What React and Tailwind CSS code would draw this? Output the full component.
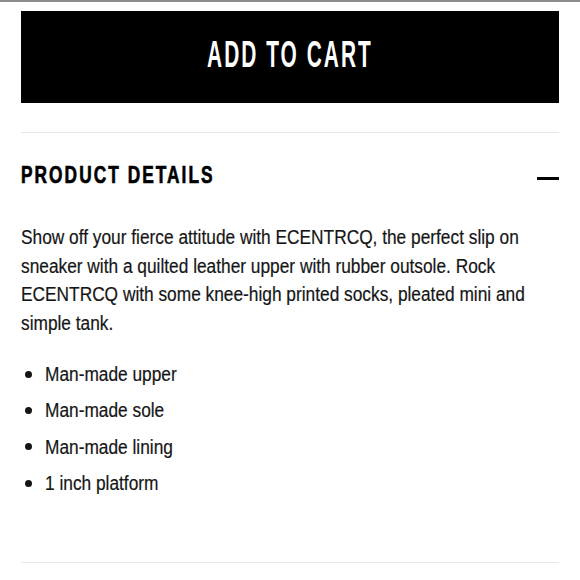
const bullets = ['Man-made upper', 'Man-made sole', 'Man-made lining', '1 inch platform'];

const App = () => {
  return (
    <div
      className="w-[580px] h-[580px] bg-white border-t-2 border-[#8c8c8c] overflow-hidden"
      style={{ fontFamily: '"Liberation Sans", Arial, sans-serif' }}
    >
      <div className="px-[21px] pt-[9px]">
        <button className="w-full h-[92px] bg-black text-white flex items-center justify-center pb-[4px] overflow-hidden">
          <span className="inline-block whitespace-nowrap text-[36px] font-bold leading-none tracking-[3.5px] scale-x-[0.58]">
            ADD TO CART
          </span>
        </button>

        <div className="mt-[29px] h-px bg-[#e8e8e8]" />

        <div className="mt-[29px] flex items-start justify-between">
          <h2 className="inline-block whitespace-nowrap origin-left scale-x-[0.72] text-[24px] font-bold leading-[25px] tracking-[2.85px] text-black [-webkit-text-stroke:0.7px_black]">
            PRODUCT DETAILS
          </h2>
          <span className="mt-[15px] block w-[22px] h-[3px] bg-black" />
        </div>

        <p className="mt-[36px] w-[622px] origin-left scale-x-[0.865] text-[20px] leading-[28.5px] text-[#151515] [-webkit-text-stroke:0.2px_#151515]">
          Show off your fierce attitude with ECENTRCQ, the perfect slip on sneaker with a quilted leather upper with
          rubber outsole. Rock ECENTRCQ with some knee-high printed socks, pleated mini and simple tank.
        </p>

        <ul className="mt-[19px]">
          {bullets.map((b) => (
            <li key={b} className="flex items-center h-[36.3px] text-[20px] leading-[36px] text-[#151515]">
              <span className="ml-[4px] mr-[13px] w-[7px] h-[7px] rounded-full bg-[#151515]" />
              <span className="inline-block whitespace-nowrap origin-left scale-x-[0.865] [-webkit-text-stroke:0.2px_#151515]">
                {b}
              </span>
            </li>
          ))}
        </ul>

        <div className="mt-[61px] h-px bg-[#e8e8e8]" />
      </div>
    </div>
  );
};

export default App;
